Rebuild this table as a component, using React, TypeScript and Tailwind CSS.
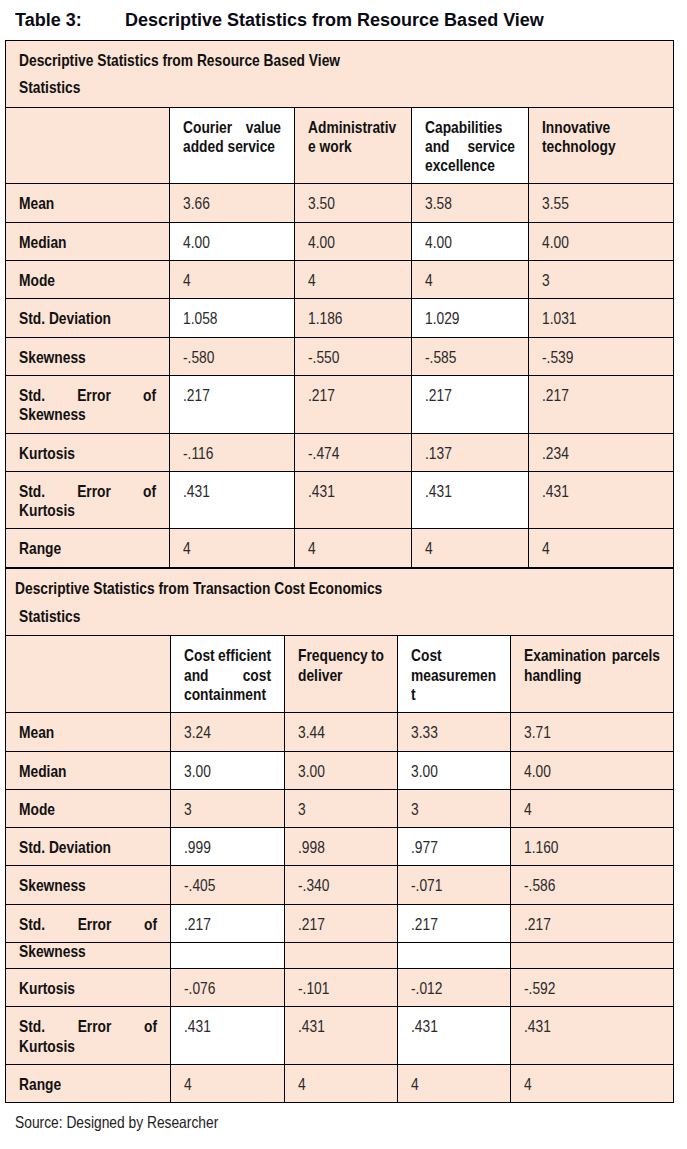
import React from "react";

const PEACH = "bg-[#fce4d6]";
const WHITE = "bg-white";

function Line({ children, justify }: { children: React.ReactNode; justify?: boolean }) {
  if (justify) {
    return <div className="flex justify-between leading-[19.3px] h-[19.3px] scale-y-[1.18]">{children}</div>;
  }
  return <div className="leading-[19.3px] h-[19.3px] whitespace-nowrap scale-y-[1.18]">{children}</div>;
}

function J({ words }: { words: string[] }) {
  return (
    <Line justify>
      {words.map((w, i) => (
        <span key={i}>{w}</span>
      ))}
    </Line>
  );
}

const cellBase = "border border-black align-top px-[13px] pt-[10px] pb-[8px]";

function LabelCell({ children, extra }: { children: React.ReactNode; extra?: string }) {
  return <td className={`${cellBase} ${PEACH} font-bold text-[#111] ${extra ?? ""}`}>{children}</td>;
}

function DataCell({ children, white }: { children?: React.ReactNode; white?: boolean }) {
  return (
    <td className={`${cellBase} ${white ? WHITE : PEACH} text-[#2a2a2a]`}>
      {children !== undefined && children !== "" ? <Line>{children}</Line> : null}
    </td>
  );
}

function HeadCell({ children, white }: { children: React.ReactNode; white?: boolean }) {
  return <td className={`${cellBase} ${white ? WHITE : PEACH} font-bold text-[#111]`}>{children}</td>;
}

type Row = { label: React.ReactNode; values: string[]; striped: boolean };

function DataRow({ row }: { row: Row }) {
  return (
    <tr>
      <LabelCell>{row.label}</LabelCell>
      {row.values.map((v, i) => (
        <DataCell key={i} white={row.striped && (i === 0 || i === 2)}>
          {v}
        </DataCell>
      ))}
    </tr>
  );
}

const seSkew = (
  <>
    <J words={["Std.", "Error", "of"]} />
    <Line>Skewness</Line>
  </>
);
const seKurt = (
  <>
    <J words={["Std.", "Error", "of"]} />
    <Line>Kurtosis</Line>
  </>
);

const rows1: Row[] = [
  { label: <Line>Mean</Line>, values: ["3.66", "3.50", "3.58", "3.55"], striped: false },
  { label: <Line>Median</Line>, values: ["4.00", "4.00", "4.00", "4.00"], striped: true },
  { label: <Line>Mode</Line>, values: ["4", "4", "4", "3"], striped: false },
  { label: <Line>Std. Deviation</Line>, values: ["1.058", "1.186", "1.029", "1.031"], striped: true },
  { label: <Line>Skewness</Line>, values: ["-.580", "-.550", "-.585", "-.539"], striped: false },
  { label: seSkew, values: [".217", ".217", ".217", ".217"], striped: true },
  { label: <Line>Kurtosis</Line>, values: ["-.116", "-.474", ".137", ".234"], striped: false },
  { label: seKurt, values: [".431", ".431", ".431", ".431"], striped: true },
  { label: <Line>Range</Line>, values: ["4", "4", "4", "4"], striped: false },
];

const rows2a: Row[] = [
  { label: <Line>Mean</Line>, values: ["3.24", "3.44", "3.33", "3.71"], striped: false },
  { label: <Line>Median</Line>, values: ["3.00", "3.00", "3.00", "4.00"], striped: true },
  { label: <Line>Mode</Line>, values: ["3", "3", "3", "4"], striped: false },
  { label: <Line>Std. Deviation</Line>, values: [".999", ".998", ".977", "1.160"], striped: true },
  { label: <Line>Skewness</Line>, values: ["-.405", "-.340", "-.071", "-.586"], striped: false },
  { label: <J words={["Std.", "Error", "of"]} />, values: [".217", ".217", ".217", ".217"], striped: true },
];

const rows2b: Row[] = [
  { label: <Line>Kurtosis</Line>, values: ["-.076", "-.101", "-.012", "-.592"], striped: false },
  { label: seKurt, values: [".431", ".431", ".431", ".431"], striped: true },
  { label: <Line>Range</Line>, values: ["4", "4", "4", "4"], striped: false },
];

export default function App() {
  return (
    <div className="w-[687px] min-h-[1149px] bg-white font-['Liberation_Sans',Arial,sans-serif] text-[13.8px]">
      <div className="h-[40px] pt-[10px] pl-[15px] text-[18px] leading-[20px] font-bold text-[#0a0a14]">
        <div className="scale-y-[1.06] whitespace-nowrap">
          <span className="inline-block w-[110px]">Table 3:</span>
          <span>Descriptive Statistics from Resource Based View</span>
        </div>
      </div>

      {/* Table 1 */}
      <table className="ml-[5px] w-[668px] table-fixed border-collapse border border-black">
        <colgroup>
          <col className="w-[164px]" />
          <col className="w-[125px]" />
          <col className="w-[117px]" />
          <col className="w-[117px]" />
          <col className="w-[145px]" />
        </colgroup>
        <tbody>
          <tr>
            <td colSpan={5} className={`border border-black ${PEACH} font-bold text-[#111] px-[13px] pt-[10px] pb-[9px] align-top`}>
              <Line>Descriptive Statistics from Resource Based View</Line>
              <div className="mt-[8px]">
                <Line>Statistics</Line>
              </div>
            </td>
          </tr>
          <tr>
            <HeadCell>
              <span />
            </HeadCell>
            <HeadCell white>
              <J words={["Courier", "value"]} />
              <Line>added service</Line>
            </HeadCell>
            <HeadCell>
              <Line>Administrativ</Line>
              <Line>e work</Line>
            </HeadCell>
            <HeadCell white>
              <Line>Capabilities</Line>
              <J words={["and", "service"]} />
              <Line>excellence</Line>
            </HeadCell>
            <HeadCell>
              <Line>Innovative</Line>
              <Line>technology</Line>
            </HeadCell>
          </tr>
          {rows1.map((r, i) => (
            <DataRow key={i} row={r} />
          ))}
        </tbody>
      </table>

      {/* Table 2 */}
      <table className="ml-[5px] w-[668px] table-fixed border-collapse border border-black">
        <colgroup>
          <col className="w-[165px]" />
          <col className="w-[114px]" />
          <col className="w-[113px]" />
          <col className="w-[113px]" />
          <col className="w-[163px]" />
        </colgroup>
        <tbody>
          <tr>
            <td colSpan={5} className={`border border-black ${PEACH} font-bold text-[#111] pt-[10px] pb-[9px] align-top`}>
              <div className="pl-[9px]">
                <Line>Descriptive Statistics from Transaction Cost Economics</Line>
              </div>
              <div className="mt-[9px] pl-[13px]">
                <Line>Statistics</Line>
              </div>
            </td>
          </tr>
          <tr>
            <HeadCell>
              <span />
            </HeadCell>
            <HeadCell white>
              <J words={["Cost", "efficient"]} />
              <J words={["and", "cost"]} />
              <Line>containment</Line>
            </HeadCell>
            <HeadCell>
              <J words={["Frequency", "to"]} />
              <Line>deliver</Line>
            </HeadCell>
            <HeadCell white>
              <Line>Cost</Line>
              <Line>measuremen</Line>
              <Line>t</Line>
            </HeadCell>
            <HeadCell>
              <J words={["Examination", "parcels"]} />
              <Line>handling</Line>
            </HeadCell>
          </tr>
          {rows2a.map((r, i) => (
            <DataRow key={i} row={r} />
          ))}
          <tr>
            <td className={`border border-black ${PEACH} font-bold text-[#111] align-top px-[13px] pt-0 pb-[6.7px]`}>
              <div className="-mt-[1px]">
                <Line>Skewness</Line>
              </div>
            </td>
            <td className={`border border-black ${WHITE}`} />
            <td className={`border border-black ${PEACH}`} />
            <td className={`border border-black ${WHITE}`} />
            <td className={`border border-black ${PEACH}`} />
          </tr>
          {rows2b.map((r, i) => (
            <DataRow key={i} row={r} />
          ))}
        </tbody>
      </table>

      <div className="pl-[15px] pt-[10px] text-[#222]">
        <Line>Source: Designed by Researcher</Line>
      </div>
    </div>
  );
}
